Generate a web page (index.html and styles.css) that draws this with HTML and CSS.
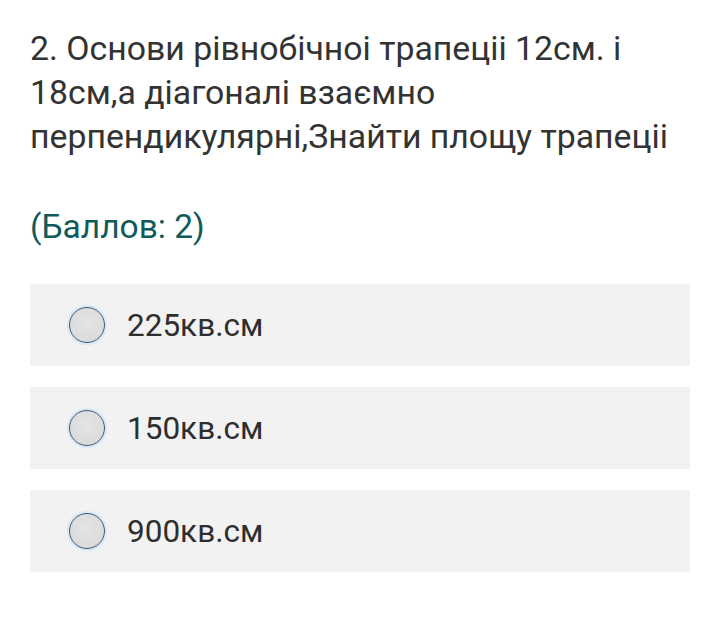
FILE: index.html
```html
<!DOCTYPE html>
<html lang="uk">
<head>
<meta charset="utf-8">
<link rel="stylesheet" href="styles.css">
</head>
<body>
<div class="quiz">
  <p class="question">2. Основи рівнобічноі трапеціі 12см. і 18см,а діагоналі взаємно перпендикулярні,Знайти площу трапеціі</p>
  <p class="points">(Баллов: 2)</p>
  <div class="options">
    <label class="option"><span class="radio"></span><span class="label">225кв.см</span></label>
    <label class="option"><span class="radio"></span><span class="label">150кв.см</span></label>
    <label class="option"><span class="radio"></span><span class="label">900кв.см</span></label>
  </div>
</div>
</body>
</html>
```
FILE: styles.css
```css
html, body {
  margin: 0;
  background: #ffffff;
}
body {
  font-family: Roboto, "Noto Sans", sans-serif;
  color: #333333;
}
.quiz {
  padding: 27px 30px 0 30px;
}
.question {
  margin: 0;
  font-size: 33.8px;
  line-height: 44px;
  width: 660px;
}
.points {
  margin: 46px 0 35px 0;
  font-size: 33.5px;
  line-height: 44px;
  color: #0f5b5b;
}
.options {
  display: flex;
  flex-direction: column;
  gap: 21px;
}
.option {
  display: flex;
  align-items: center;
  height: 82px;
  width: 660px;
  background: #f2f2f2;
  padding-left: 39px;
  box-sizing: border-box;
}
.radio {
  width: 36px;
  height: 36px;
  box-sizing: border-box;
  border-radius: 50%;
  border: 1.5px solid #3d5776;
  background: radial-gradient(circle at 50% 40%, #e4e4e4 0%, #d8d8d8 100%);
  box-shadow: 0 0 0 2px rgba(200, 225, 245, 0.6);
  flex: none;
}
.label {
  margin-left: 22px;
  font-size: 31.5px;
  color: #2e2e2e;
}
```
